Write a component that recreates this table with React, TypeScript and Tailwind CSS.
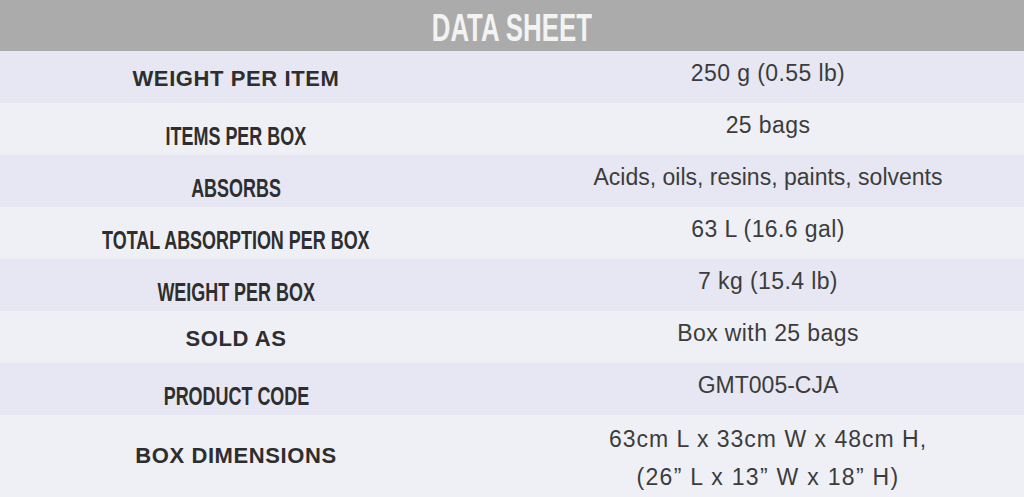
import React from 'react';

type Row = {
  label: string;
  value: React.ReactNode;
  condensed?: boolean;
  tall?: boolean;
};

const rows: Row[] = [
  { label: 'WEIGHT PER ITEM', value: '250 g (0.55 lb)' },
  { label: 'ITEMS PER BOX', value: '25 bags', condensed: true },
  {
    label: 'ABSORBS',
    value: <span className="tracking-normal">Acids, oils, resins, paints, solvents</span>,
    condensed: true,
  },
  { label: 'TOTAL ABSORPTION PER BOX', value: '63 L (16.6 gal)', condensed: true },
  { label: 'WEIGHT PER BOX', value: '7 kg (15.4 lb)', condensed: true },
  { label: 'SOLD AS', value: 'Box with 25 bags' },
  { label: 'PRODUCT CODE', value: <span className="tracking-normal">GMT005-CJA</span>, condensed: true },
  {
    label: 'BOX DIMENSIONS',
    value: (
      <>
        <span className="block tracking-[1px]">63cm L x 33cm W x 48cm H,</span>
        <span className="block tracking-[1.3px]">(26” L x 13” W x 18” H)</span>
      </>
    ),
    tall: true,
  },
];

export default function App() {
  return (
    <div className="w-[1024px] h-[497px] overflow-hidden bg-[#eff0f6] font-['Liberation_Sans',Arial,sans-serif]">
      <div className="h-[51px] bg-[#ababab] flex items-center justify-center">
        <span className="inline-block scale-x-[0.68] text-[38px] leading-none font-bold text-[#f3f3f3] pt-1">
          DATA SHEET
        </span>
      </div>

      {rows.map((row, i) =>
      <div
        key={row.label}
        className={`flex ${row.tall ? 'h-[82px]' : 'h-[52px]'} ${i % 2 === 0 ? 'bg-[#e6e7f2]' : 'bg-[#eff0f6]'}`}>

          <div
          className={`w-[512px] pr-[40px] flex items-center justify-center text-[#2e2e2e] font-bold ${row.condensed ? 'pt-[14px]' : row.tall ? 'pt-0' : 'pt-1'}`}>

            {row.condensed ?
          <span className="inline-block scale-x-[0.69] text-[26px] leading-none whitespace-nowrap">
                {row.label}
              </span> :

          <span className="text-[22px] leading-none tracking-[0.6px] whitespace-nowrap">
                {row.label}
              </span>
          }
          </div>
          <div
          className={`flex-1 flex items-center justify-center text-center text-[23px] text-[#3c3c3c] tracking-[0.4px] ${row.tall ? 'leading-[38px] pt-[3px]' : 'leading-none pb-2'}`}>

            <div>{row.value}</div>
          </div>
        </div>
      )}
    </div>);

}
